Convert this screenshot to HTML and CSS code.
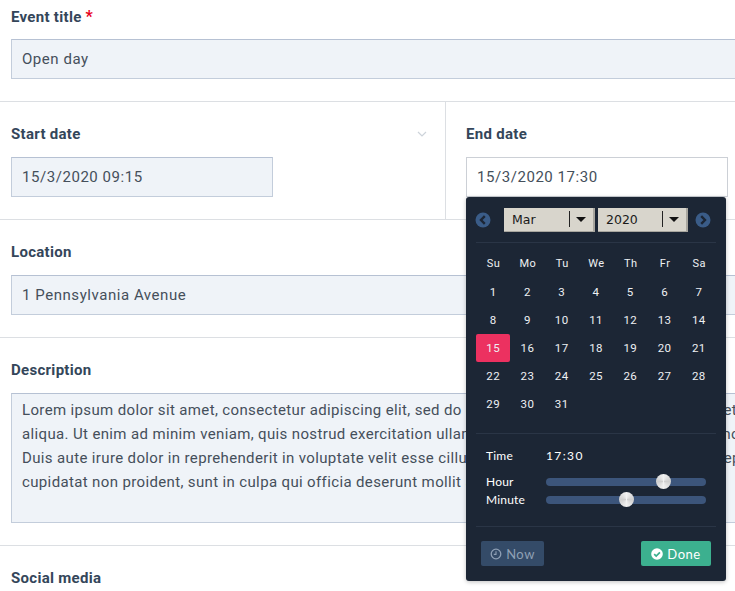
FILE: index.html
```html
<!DOCTYPE html>
<html lang="en">
<head>
<meta charset="utf-8">
<title>Event</title>
<link rel="stylesheet" href="styles.css">
</head>
<body>
<div class="form">
  <section class="section first">
    <div class="label">Event title <span class="req">*</span></div>
    <div class="input wide">Open day</div>
  </section>
  <section class="section dates">
    <div class="col col-start">
      <div class="label-row">
        <div class="label">Start date</div>
        <svg class="chev" width="10" height="6" viewBox="0 0 10 6"><path d="M1 1l4 4 4-4" fill="none" stroke="#cdd3da" stroke-width="1.2"/></svg>
      </div>
      <div class="input date">15/3/2020 09:15</div>
    </div>
    <div class="col col-end">
      <div class="label">End date</div>
      <div class="input date active">15/3/2020 17:30</div>
      <div class="picker">
        <div class="pick-head">
          <svg class="nav" width="16" height="16" viewBox="0 0 16 16"><circle cx="8" cy="8" r="7.5" fill="#3a5c88"/><path d="M9.8 4.2L6 8l3.8 3.8" fill="none" stroke="#1c2635" stroke-width="2.4"/></svg>
          <div class="selects">
            <div class="select month"><span class="sel-text">Mar</span><span class="sel-bar"></span><span class="sel-arrow"></span></div>
            <div class="select year"><span class="sel-text">2020</span><span class="sel-bar"></span><span class="sel-arrow"></span></div>
          </div>
          <svg class="nav" width="16" height="16" viewBox="0 0 16 16"><circle cx="8" cy="8" r="7.5" fill="#3a5c88"/><path d="M6.2 4.2L10 8l-3.8 3.8" fill="none" stroke="#1c2635" stroke-width="2.4"/></svg>
        </div>
        <div class="days">
          <div class="dow">Su</div><div class="dow">Mo</div><div class="dow">Tu</div><div class="dow">We</div><div class="dow">Th</div><div class="dow">Fr</div><div class="dow">Sa</div>
        </div>
        <div class="days dates-grid">
          <div>1</div><div>2</div><div>3</div><div>4</div><div>5</div><div>6</div><div>7</div>
          <div>8</div><div>9</div><div>10</div><div>11</div><div>12</div><div>13</div><div>14</div>
          <div class="today">15</div><div>16</div><div>17</div><div>18</div><div>19</div><div>20</div><div>21</div>
          <div>22</div><div>23</div><div>24</div><div>25</div><div>26</div><div>27</div><div>28</div>
          <div>29</div><div>30</div><div>31</div>
        </div>
        <div class="time">
          <div class="time-row"><span class="time-label">Time</span><span class="time-value">17:30</span></div>
          <div class="slider-row hour"><span class="time-label">Hour</span><div class="track"><span class="thumb" style="left:73%"></span></div></div>
          <div class="slider-row"><span class="time-label">Minute</span><div class="track"><span class="thumb" style="left:50%"></span></div></div>
        </div>
        <div class="actions">
          <div class="btn now">
            <svg width="12" height="12" viewBox="0 0 12 12"><circle cx="6" cy="6" r="4.8" fill="none" stroke="#8fa0b5" stroke-width="1.3"/><path d="M6 3.2V6.4H3.8" fill="none" stroke="#8fa0b5" stroke-width="1.1"/></svg>
            <span>Now</span>
          </div>
          <div class="btn done">
            <svg width="12" height="12" viewBox="0 0 12 12"><circle cx="6" cy="6" r="5.8" fill="#fff"/><path d="M3.2 6.1L5.2 8.1 8.9 4.3" fill="none" stroke="#3cb08f" stroke-width="1.7"/></svg>
            <span>Done</span>
          </div>
        </div>
      </div>
    </div>
  </section>
  <section class="section">
    <div class="label">Location</div>
    <div class="input wide">1 Pennsylvania Avenue</div>
  </section>
  <section class="section">
    <div class="label">Description</div>
    <div class="input wide area">Lorem ipsum dolor sit amet, consectetur adipiscing elit, sed do eiusmod tempor incididunt ut labore et dolore magna<br>aliqua. Ut enim ad minim veniam, quis nostrud exercitation ullamco laboris nisi ut aliquip ex ea commodo consequat.<br>Duis aute irure dolor in reprehenderit in voluptate velit esse cillum dolore eu fugiat nulla pariatur. Excepteur sint occaecat<br>cupidatat non proident, sunt in culpa qui officia deserunt mollit anim id est laborum.</div>
  </section>
  <section class="section">
    <div class="label">Social media</div>
  </section>
</div>
</body>
</html>
```

FILE: styles.css
```css
html, body {
  margin: 0;
  padding: 0;
  height: 591px;
  overflow: hidden;
  background: #fff;
}
body {
  font-family: Roboto, "Liberation Sans", sans-serif;
  color: #3a4654;
}
.form {
  width: 1000px;
}
.section {
  padding: 22px 11px 22px;
  border-bottom: 1px solid #dcdfe3;
}
.section.first {
  padding-top: 7px;
}
.label {
  font-size: 15px;
  font-weight: 700;
  line-height: 20px;
  letter-spacing: 0.3px;
  color: #34465a;
}
.req {
  color: #e8001c;
  font-size: 16px;
  line-height: 16px;
}
.input {
  box-sizing: border-box;
  margin-top: 13px;
  height: 40px;
  padding: 0 10px;
  line-height: 38px;
  font-size: 15px;
  letter-spacing: 0.55px;
  color: #454f5b;
  background: #eff3f8;
  border: 1px solid #c3cddb;
  border-top-color: #b6c1d3;
  white-space: nowrap;
}
.first .input {
  margin-top: 12px;
}
.area {
  height: 130px;
  padding-top: 4px;
  line-height: 24px;
  letter-spacing: 0.36px;
}
.dates {
  display: flex;
  padding: 0;
}
.col {
  position: relative;
  box-sizing: border-box;
  padding: 22px 0 22px;
}
.col-start {
  width: 446px;
  padding-left: 11px;
  padding-right: 18px;
  border-right: 1px solid #dcdfe3;
}
.col-end {
  padding-left: 20px;
  flex: 1;
}
.label-row {
  display: flex;
  align-items: center;
  justify-content: space-between;
}
.chev {
  display: block;
}
.date {
  width: 262px;
}
.active {
  background: #fff;
  border-color: #ccd0d6;
}
.picker {
  position: absolute;
  left: 20px;
  top: 95px;
  z-index: 2;
  box-sizing: border-box;
  width: 260px;
  height: 384px;
  padding: 0 10px;
  background: #1c2635;
  border-radius: 3px;
  box-shadow: 0 1px 4px rgba(0, 0, 0, 0.25);
  color: #fff;
}
.pick-head {
  display: flex;
  align-items: center;
  height: 45px;
  border-bottom: 1px solid #2a3546;
}
.nav {
  display: block;
  margin-left: -1px;
}
.selects {
  display: flex;
  gap: 3px;
  margin: 0 8px 0 13px;
}
.select {
  display: flex;
  align-items: center;
  box-sizing: border-box;
  height: 24px;
  background: #d8d5cc;
  border-right: 2px solid #a8a69f;
  border-bottom: 1px solid #a8a69f;
  color: #1a1a1a;
  font-family: "DejaVu Sans", sans-serif;
  font-size: 12.5px;
}
.month {
  width: 91px;
}
.year {
  width: 90px;
}
.sel-text {
  flex: 1;
  padding-left: 8px;
}
.sel-bar {
  width: 1px;
  height: 16px;
  background: #222;
}
.sel-arrow {
  margin: 0 7px 0 6px;
  width: 0;
  height: 0;
  border-left: 5px solid transparent;
  border-right: 5px solid transparent;
  border-top: 5px solid #111;
}
.days {
  display: grid;
  grid-template-columns: repeat(7, 1fr);
  text-align: center;
  font-size: 11.5px;
  letter-spacing: 0.4px;
  color: #eef0f3;
}
.dow {
  height: 35px;
  line-height: 41px;
  font-size: 11px;
  letter-spacing: 0.5px;
  padding-left: 1px;
}
.dates-grid > div {
  height: 28px;
  line-height: 28px;
}
.dates-grid {
  padding-bottom: 15px;
  border-bottom: 1px solid #2a3546;
}
.dates-grid .today {
  background: #ec3160;
  border-radius: 2px;
}
.time {
  padding: 11px 10px 0;
  height: 81px;
  font-family: Lato, sans-serif;
  font-size: 12px;
  letter-spacing: 0.2px;
  border-bottom: 1px solid #2a3546;
}
.time-row {
  display: flex;
  align-items: center;
  height: 22px;
  margin-bottom: 6px;
}
.time-label {
  width: 60px;
  flex: none;
  position: relative;
  top: -1px;
}
.time-value {
  font-size: 12px;
  letter-spacing: 1.4px;
  position: relative;
  top: -1px;
}
.slider-row {
  display: flex;
  align-items: center;
  height: 18px;
}
.track {
  position: relative;
  flex: 1;
  height: 8px;
  background: #3c557b;
  border-radius: 4px;
}
.thumb {
  position: absolute;
  top: -4px;
  width: 15px;
  height: 15px;
  margin-left: -7px;
  border-radius: 50%;
  background: conic-gradient(#f2f2f2, #cfcfcf, #f2f2f2, #cfcfcf, #f2f2f2);
}
.actions {
  display: flex;
  justify-content: space-between;
  padding: 14px 5px 0;
}
.btn {
  display: flex;
  align-items: center;
  justify-content: center;
  gap: 4px;
  box-sizing: border-box;
  height: 25px;
  border-radius: 2px;
  font-family: Lato, sans-serif;
  font-size: 13px;
  letter-spacing: 0.5px;
}
.btn svg {
  display: block;
}
.now {
  width: 63px;
  background: #344b68;
  color: #8fa0b5;
}
.done {
  width: 70px;
  background: #3cb08f;
  color: #fff;
}
```
